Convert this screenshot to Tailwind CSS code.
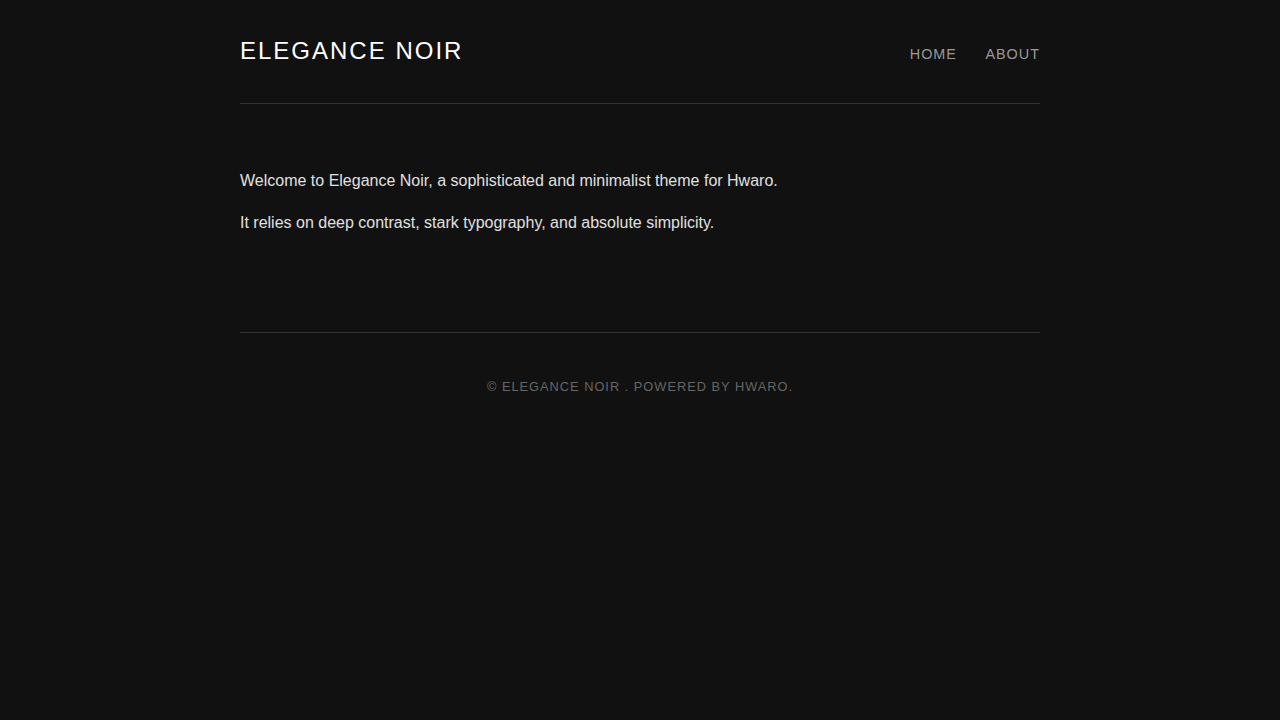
<!DOCTYPE html>
<html lang="en">
<head>
<meta charset="utf-8">
<script src="https://cdn.jsdelivr.net/npm/@tailwindcss/browser@4"></script>
</head>
<body class="bg-[#111111] min-h-screen font-['Liberation_Sans',Arial,sans-serif]">
<div class="w-[800px] mx-auto">
<header class="flex justify-between items-center h-[104px] border-b border-[#333333] pt-[8px] pb-[10px]">
<a class="text-[24px] leading-[36px] tracking-[2px] text-white">ELEGANCE NOIR</a>
<nav class="flex gap-[28.5px] pt-[6px] text-[14.4px] tracking-[1px] leading-[22px] text-[#999999]"><a>HOME</a><a>ABOUT</a></nav>
</header>
<main class="pt-[64px] pb-[96px] text-[16px] leading-[26px] text-[#e0e0e0]">
<p class="mb-[16px]">Welcome to Elegance Noir, a sophisticated and minimalist theme for Hwaro.</p>
<p>It relies on deep contrast, stark typography, and absolute simplicity.</p>
</main>
<footer class="border-t border-[#333333] pt-[44px] text-center text-[12.8px] leading-[20px] tracking-[1px] text-[#666666]">© ELEGANCE NOIR . POWERED BY HWARO.</footer>
</div>
</body>
</html>
